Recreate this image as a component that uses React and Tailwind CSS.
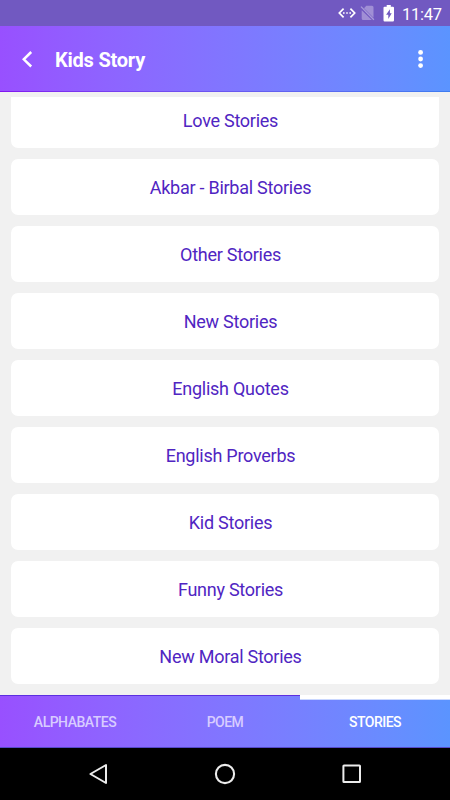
const stories = [
  'Love Stories',
  'Akbar - Birbal Stories',
  'Other Stories',
  'New Stories',
  'English Quotes',
  'English Proverbs',
  'Kid Stories',
  'Funny Stories',
  'New Moral Stories',
];

const tabs = [
  { label: 'ALPHABATES', active: false },
  { label: 'POEM', active: false },
  { label: 'STORIES', active: true },
];

function StatusBar() {
  return (
    <div className="flex h-[26px] shrink-0 items-center justify-end bg-[#7159c1] pr-[9px] text-white">
      <svg width="18" height="14" viewBox="0 0 18 14" fill="none" stroke="currentColor" strokeWidth="1.7">
        <path d="M5.6 2.6 1.3 7l4.3 4.4M12.4 2.6 16.7 7l-4.3 4.4" />
        <path d="M5 6.2h1.6v1.6H5zM8.2 6.2h1.6v1.6H8.2zM11.4 6.2H13v1.6h-1.6z" fill="currentColor" stroke="none" />
      </svg>
      <svg className="ml-[4px]" width="15" height="16" viewBox="0 0 15 16" fill="none">
        <path d="M6.3 .8H12q1.5 0 1.5 1.5v10.5L4 3.2zM1.7 5.2 11.8 15H3.2q-1.5 0-1.5-1.5z" fill="#a08fd5" />
        <path d="M1 1.6 13.9 14.8" stroke="#a99bda" strokeWidth="1.3" />
      </svg>
      <svg className="ml-[8px]" width="12" height="17" viewBox="0 0 12 17">
        <path d="M3.7 0h4.1v1.7h2.1q1.1 0 1.1 1.1v12.4q0 1.2-1.1 1.2H1.6q-1.1 0-1.1-1.2V2.8q0-1.1 1.1-1.1h2.1z" fill="currentColor" />
        <path d="M6.9 4.2 3.1 9.8h2.2v4.1L8.7 8.3H6.9z" fill="#7159c1" />
      </svg>
      <span className="ml-[7px] mt-[3px] w-[39px] whitespace-nowrap text-[16.5px] leading-5 tracking-[-0.25px]">11:47</span>
    </div>
  );
}

function Header() {
  return (
    <header className="flex h-[66px] shrink-0 flex-col bg-linear-to-r from-[#9850ff] to-[#5b94ff] text-white">
      <div className="flex flex-1 items-center pl-[21px] pr-[26.5px]">
        <svg width="12" height="18" viewBox="0 0 12 18" fill="none" stroke="currentColor" strokeWidth="2.5">
          <path d="M10.2 2 2.8 9.3l7.4 7.2" />
        </svg>
        <h1 className="ml-[22px] mt-[3px] text-[20px] font-bold leading-6 tracking-[-0.22px]">Kids Story</h1>
        <svg className="ml-auto mt-px" width="6" height="20" viewBox="0 0 6 20" fill="currentColor">
          <circle cx="2.6" cy="3.4" r="2.4" />
          <circle cx="2.6" cy="10" r="2.4" />
          <circle cx="2.6" cy="16.6" r="2.4" />
        </svg>
      </div>
      <div className="h-px bg-linear-to-r from-[#8114f0] to-[#3d7cf0]" />
    </header>
  );
}

function TabBar() {
  return (
    <div className="grid h-[53px] shrink-0 grid-cols-3 border-b border-[#5549c8] bg-linear-to-r from-[#9850ff] to-[#5b94ff]">
      {tabs.map((tab) => (
        <div
          key={tab.label}
          className={tab.active ? 'flex flex-col text-white' : 'flex flex-col text-[#d8ccff]'}
        >
          <div className={tab.active ? 'h-[5px] border-b border-[#c9d7ff] bg-white' : 'h-[5px] border-t border-[#5c2fe0]'} />
          <span className="mt-[14px] text-center text-[14px] font-medium leading-4 tracking-[-0.5px]">{tab.label}</span>
        </div>
      ))}
    </div>
  );
}

function NavigationBar() {
  return (
    <div className="flex h-[52px] shrink-0 items-center bg-black pl-[88px] text-[#ececec]">
      <svg width="20" height="22" viewBox="0 0 20 22" fill="none" stroke="currentColor" strokeWidth="2" strokeLinejoin="round">
        <path d="M18 2v18L2.4 11z" />
      </svg>
      <svg className="ml-[106px]" width="22" height="22" viewBox="0 0 22 22" fill="none" stroke="currentColor" strokeWidth="2.1">
        <circle cx="11" cy="11" r="9.1" />
      </svg>
      <svg className="ml-[106px]" width="20" height="20" viewBox="0 0 20 20" fill="none" stroke="currentColor" strokeWidth="2">
        <rect x="1.4" y="1.4" width="16.6" height="16.6" rx="0.6" />
      </svg>
    </div>
  );
}

export default function App() {
  return (
    <div className="flex h-[800px] w-[450px] flex-col overflow-hidden bg-[#f1f1f1] font-['Roboto',sans-serif]">
      <StatusBar />
      <Header />
      <main className="mt-[5px] flex min-h-0 flex-1 flex-col justify-end gap-[10.74px] overflow-hidden px-[11px] pb-[10.7px]">
        {stories.map((story) => (
          <div
            key={story}
            className="flex h-[56.33px] shrink-0 items-center justify-center rounded-[7px] bg-white pl-[11px] pt-[1.6px] text-[18px] tracking-[-0.26px] text-[#5025c2]"
          >
            {story}
          </div>
        ))}
      </main>
      <TabBar />
      <NavigationBar />
    </div>
  );
}
